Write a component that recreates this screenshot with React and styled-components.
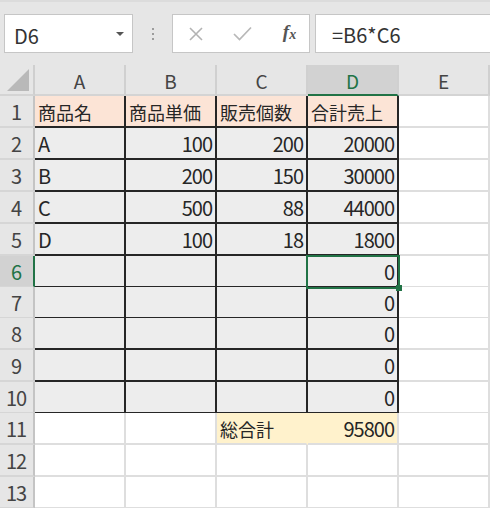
import React from 'react';
import styled, { createGlobalStyle } from 'styled-components';

const Global = createGlobalStyle`
  html, body { margin: 0; padding: 0; width: 490px; height: 508px; overflow: hidden; background: #fff; }
  #root { width: 490px; height: 508px; overflow: hidden; }
`;

const FONT = `"Noto Sans CJK JP", "Noto Sans", sans-serif`;
const GREEN = '#217346';
const COLS = '35px 91px 91px 91px 91px 1fr';

const Page = styled.div`
  width: 490px;
  height: 508px;
  background: #e6e6e6;
  font-family: ${FONT};
  display: flex;
  flex-direction: column;
  overflow: hidden;
`;

const Toolbar = styled.div`
  display: flex;
  height: 65px;
  flex: none;
  box-sizing: border-box;
  padding: 12px 0 12px 4px;
  border-top: 2px solid #dcdcdc;
`;

const NameBox = styled.div`
  width: 129px;
  box-sizing: border-box;
  border: 1px solid #c6c6c6;
  background: #fff;
  display: flex;
  align-items: center;
  justify-content: space-between;
  padding: 3px 8px 0 9px;
  font-size: 20px;
  color: #333;
`;

const Caret = styled.span`
  width: 0;
  height: 0;
  margin-top: -3px;
  border-left: 4px solid transparent;
  border-right: 4px solid transparent;
  border-top: 4px solid #555;
`;

const Dots = styled.div`
  width: 39px;
  display: flex;
  flex-direction: column;
  align-items: center;
  justify-content: center;
  gap: 3px;
`;

const Dot = styled.span`
  width: 2px;
  height: 2px;
  background: #9c9c9c;
`;

const FxButtons = styled.div`
  width: 138px;
  box-sizing: border-box;
  border: 1px solid #c6c6c6;
  background: #fff;
  display: grid;
  grid-template-columns: 46px 46px 46px;
  align-items: center;
  justify-items: center;
`;

const Fx = styled.span`
  font-family: "Liberation Serif", serif;
  font-style: italic;
  font-weight: bold;
  font-size: 19px;
  color: #555;
  margin-left: 3px;
  margin-top: -3px;
  sub { font-size: 14px; vertical-align: -1px; margin-left: 0; }
`;

const FormulaBox = styled.div`
  flex: 1;
  margin-left: 5px;
  box-sizing: border-box;
  border: 1px solid #c6c6c6;
  border-right: none;
  background: #fff;
  display: flex;
  align-items: center;
  padding: 1px 0 0 16px;
  font-size: 20px;
  color: #333;
`;

const Sheet = styled.div`
  display: flex;
  flex-direction: column;
  background: #fff;
`;

const Row = styled.div`
  display: grid;
  grid-template-columns: ${COLS};
  height: ${p => p.$h}px;
  flex: none;
`;

const Corner = styled.div`
  box-sizing: border-box;
  background: #e6e6e6;
  border-right: 2px solid #cfcfcf;
  border-bottom: 2px solid #d4d4d4;
  display: flex;
  justify-content: flex-end;
  align-items: flex-end;
  padding: 0 4px 3px 0;
`;

const ColHead = styled.div`
  box-sizing: border-box;
  background: ${p => (p.$active ? '#d2d2d2' : '#e6e6e6')};
  color: ${p => (p.$active ? GREEN : '#444')};
  border-right: 2px solid #d0d0d0;
  border-bottom: 2px solid ${p => (p.$active ? GREEN : '#d4d4d4')};
  display: flex;
  align-items: center;
  justify-content: center;
  font-size: 19px;
  padding-top: 1px;
`;

const RowHead = styled.div`
  box-sizing: border-box;
  background: ${p => (p.$active ? '#d2d2d2' : '#e6e6e6')};
  color: ${p => (p.$active ? GREEN : '#444')};
  border-right: 2px solid ${p => (p.$active ? GREEN : '#c4c4c4')};
  border-bottom: 2px solid #d6d6d6;
  display: flex;
  align-items: center;
  justify-content: center;
  font-size: 20px;
  letter-spacing: -1px;
  padding-right: 1px;
`;

const FILLS = { none: '#fff', peach: '#fce4d6', gray: '#ededed', yellow: '#fff2cc' };

const Cell = styled.div`
  position: relative;
  box-sizing: border-box;
  background: ${p => FILLS[p.$fill]};
  border-right: 2px solid ${p => (p.$boxed ? '#262626' : p.$rightColor || '#dedede')};
  border-bottom: 2px solid ${p => (p.$boxed ? '#262626' : '#dedede')};
  display: flex;
  align-items: center;
  justify-content: ${p => (p.$right ? 'flex-end' : 'flex-start')};
  padding: 1px 3px 0 3px;
  color: #262626;
  white-space: nowrap;
`;

const Val = styled.span`
  font-size: ${p => (p.$latin ? '20px' : '18px')};
  letter-spacing: ${p => (p.$latin ? '-1px' : '0')};
`;

const Selection = styled.div`
  position: absolute;
  z-index: 5;
  left: -2px;
  top: -1px;
  right: -3px;
  bottom: -3px;
  border: 2px solid ${GREEN};
  pointer-events: none;
`;

const Handle = styled.div`
  position: absolute;
  right: -4px;
  bottom: -4px;
  width: 6px;
  height: 6px;
  background: ${GREEN};
`;

const rows = [
  { n: 1, h: 32, fill: 'peach', boxed: true, cells: ['商品名', '商品単価', '販売個数', '合計売上'] },
  { n: 2, h: 32, fill: 'gray', boxed: true, cells: ['A', '100', '200', '20000'] },
  { n: 3, h: 32, fill: 'gray', boxed: true, cells: ['B', '200', '150', '30000'] },
  { n: 4, h: 32, fill: 'gray', boxed: true, cells: ['C', '500', '88', '44000'] },
  { n: 5, h: 32, fill: 'gray', boxed: true, cells: ['D', '100', '18', '1800'] },
  { n: 6, h: 31, fill: 'gray', boxed: true, cells: ['', '', '', '0'], active: true },
  { n: 7, h: 31, fill: 'gray', boxed: true, cells: ['', '', '', '0'] },
  { n: 8, h: 32, fill: 'gray', boxed: true, cells: ['', '', '', '0'] },
  { n: 9, h: 32, fill: 'gray', boxed: true, cells: ['', '', '', '0'] },
  { n: 10, h: 31, fill: 'gray', boxed: true, cells: ['', '', '', '0'] },
  { n: 11, h: 32, total: true },
  { n: 12, h: 32, cells: ['', '', '', ''] },
  { n: 13, h: 32, cells: ['', '', '', ''] },
];

const isLatin = s => /^[A-Za-z0-9]+$/.test(s);
const isNum = s => /^\d+$/.test(s);

function CrossIcon() {
  return (
    <svg width="14" height="14" viewBox="0 0 14 14">
      <path d="M1 1 L13 13 M13 1 L1 13" stroke="#b3b3b3" strokeWidth="1.6" fill="none" />
    </svg>
  );
}

function CheckIcon() {
  return (
    <svg width="19" height="15" viewBox="0 0 19 15">
      <path d="M1 8 L6.5 13.5 L18 1.5" stroke="#b8b8b8" strokeWidth="1.7" fill="none" />
    </svg>
  );
}

function DataRow({ row }) {
  if (row.total) {
    return (
      <Row $h={row.h}>
        <RowHead>{row.n}</RowHead>
        <Cell $fill="none" />
        <Cell $fill="none" />
        <Cell $fill="yellow" $rightColor="#fff2cc"><Val>総合計</Val></Cell>
        <Cell $fill="yellow" $right><Val $latin>95800</Val></Cell>
        <Cell $fill="none" />
      </Row>
    );
  }
  return (
    <Row $h={row.h}>
      <RowHead $active={row.active}>{row.n}</RowHead>
      {row.cells.map((c, i) => (
        <Cell key={i} $fill={row.fill || 'none'} $boxed={row.boxed} $right={isNum(c)}>
          {c && <Val $latin={isLatin(c)}>{c}</Val>}
          {row.active && i === 3 && (
            <Selection>
              <Handle />
            </Selection>
          )}
        </Cell>
      ))}
      <Cell $fill="none" />
    </Row>
  );
}

export default function App() {
  return (
    <>
      <Global />
      <Page>
        <Toolbar>
          <NameBox>
            <span>D6</span>
            <Caret />
          </NameBox>
          <Dots>
            <Dot />
            <Dot />
            <Dot />
          </Dots>
          <FxButtons>
            <CrossIcon />
            <CheckIcon />
            <Fx>f<sub>x</sub></Fx>
          </FxButtons>
          <FormulaBox>=B6*C6</FormulaBox>
        </Toolbar>
        <Sheet>
          <Row $h={31}>
            <Corner>
              <svg width="22" height="22" viewBox="0 0 22 22">
                <polygon points="22,0 22,22 0,22" fill="#b9b9b9" />
              </svg>
            </Corner>
            {['A', 'B', 'C', 'D', 'E'].map(l => (
              <ColHead key={l} $active={l === 'D'}>{l}</ColHead>
            ))}
          </Row>
          {rows.map(r => (
            <DataRow key={r.n} row={r} />
          ))}
        </Sheet>
      </Page>
    </>
  );
}
